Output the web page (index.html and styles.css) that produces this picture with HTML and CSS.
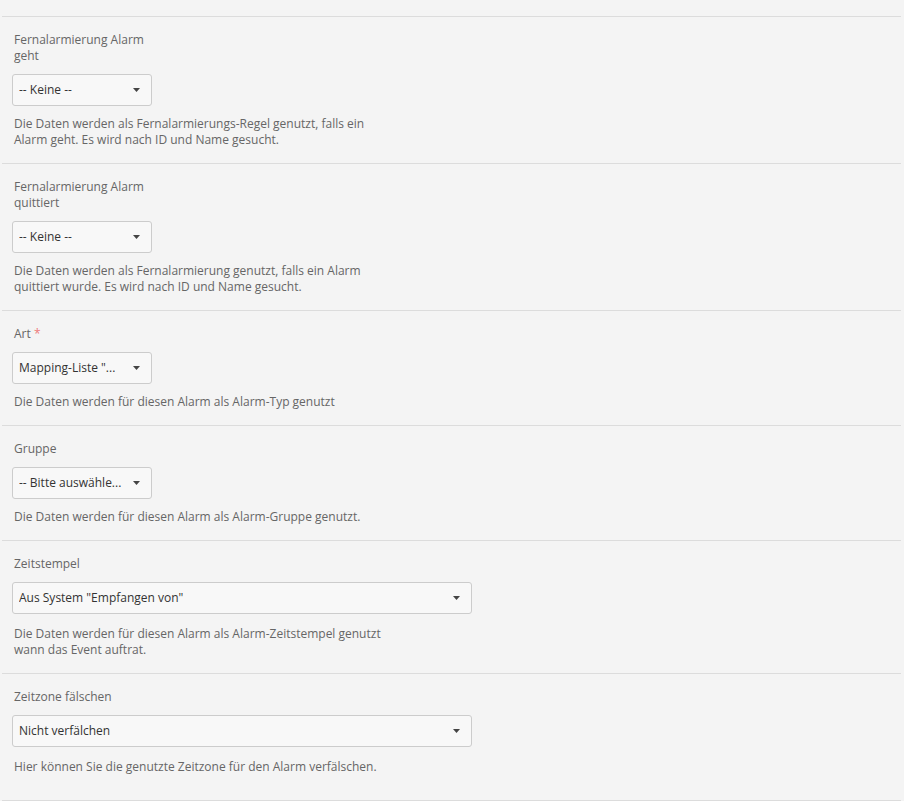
FILE: index.html
```html
<!DOCTYPE html>
<html lang="de">
<head>
  <meta charset="UTF-8">
  <meta name="viewport" content="width=device-width, initial-scale=1.0">
  <title>Alarm Mapping</title>
  <link rel="stylesheet" href="styles.css">
</head>
<body>
  <div class="form">
    <!-- Fernalarmierung geht -->
    <div class="field">
      <label class="field-label">Fernalarmierung Alarm<br>geht</label>
      <div class="select">
        <span class="select-value">-- Keine --</span>
        <svg class="caret" width="7" height="4" viewBox="0 0 7 4"><path d="M0 0h7L3.5 4z"/></svg>
      </div>
      <p class="help">Die Daten werden als Fernalarmierungs-Regel genutzt, falls ein<br>Alarm geht. Es wird nach ID und Name gesucht.</p>
    </div>

    <!-- Fernalarmierung quittiert -->
    <div class="field">
      <label class="field-label">Fernalarmierung Alarm<br>quittiert</label>
      <div class="select">
        <span class="select-value">-- Keine --</span>
        <svg class="caret" width="7" height="4" viewBox="0 0 7 4"><path d="M0 0h7L3.5 4z"/></svg>
      </div>
      <p class="help">Die Daten werden als Fernalarmierung genutzt, falls ein Alarm<br>quittiert wurde. Es wird nach ID und Name gesucht.</p>
    </div>

    <!-- Art -->
    <div class="field">
      <label class="field-label">Art <span class="required">*</span></label>
      <div class="select">
        <span class="select-value">Mapping-Liste "...</span>
        <svg class="caret" width="7" height="4" viewBox="0 0 7 4"><path d="M0 0h7L3.5 4z"/></svg>
      </div>
      <p class="help">Die Daten werden für diesen Alarm als Alarm-Typ genutzt</p>
    </div>

    <!-- Gruppe -->
    <div class="field">
      <label class="field-label">Gruppe</label>
      <div class="select">
        <span class="select-value">-- Bitte auswähle...</span>
        <svg class="caret" width="7" height="4" viewBox="0 0 7 4"><path d="M0 0h7L3.5 4z"/></svg>
      </div>
      <p class="help">Die Daten werden für diesen Alarm als Alarm-Gruppe genutzt.</p>
    </div>

    <!-- Zeitstempel -->
    <div class="field">
      <label class="field-label">Zeitstempel</label>
      <div class="select wide">
        <span class="select-value">Aus System "Empfangen von"</span>
        <svg class="caret" width="7" height="4" viewBox="0 0 7 4"><path d="M0 0h7L3.5 4z"/></svg>
      </div>
      <p class="help">Die Daten werden für diesen Alarm als Alarm-Zeitstempel genutzt<br>wann das Event auftrat.</p>
    </div>

    <!-- Zeitzone -->
    <div class="field last">
      <label class="field-label">Zeitzone fälschen</label>
      <div class="select wide">
        <span class="select-value">Nicht verfälchen</span>
        <svg class="caret" width="7" height="4" viewBox="0 0 7 4"><path d="M0 0h7L3.5 4z"/></svg>
      </div>
      <p class="help">Hier können Sie die genutzte Zeitzone für den Alarm verfälschen.</p>
    </div>
  </div>
</body>
</html>
```

FILE: styles.css
```css
/* General */
body {
  margin: 0;
  background-color: #f4f4f4;
  font-family: 'Open Sans', 'Liberation Sans', sans-serif;
  font-size: 12px;
  line-height: 16px;
  color: #666666;
}

.form {
  padding: 16px 3px 0 2px;
}

/* Field rows */
.field {
  display: flex;
  flex-direction: column;
  align-items: flex-start;
  gap: 10px;
  padding: 15px 10px;
  border-top: 1px solid #dcdcdc;
}

.field.last {
  padding-bottom: 25px;
  border-bottom: 1px solid #dcdcdc;
}

.field-label {
  display: block;
  padding-left: 2px;
  color: #666666;
}

.required {
  color: #ee7a7a;
}

/* Select boxes */
.select {
  display: flex;
  align-items: center;
  justify-content: space-between;
  box-sizing: border-box;
  width: 140px;
  height: 32px;
  padding: 0 11px 0 6px;
  background-color: #f8f8f8;
  border: 1px solid #cccccc;
  border-radius: 3px;
  color: #333333;
}

.select.wide {
  width: 460px;
  margin-bottom: 2px;
}

.select-value {
  white-space: nowrap;
  overflow: hidden;
}

.caret {
  flex-shrink: 0;
  fill: #444444;
}

/* Help text */
.help {
  margin: 0;
  padding-left: 2px;
}
```
